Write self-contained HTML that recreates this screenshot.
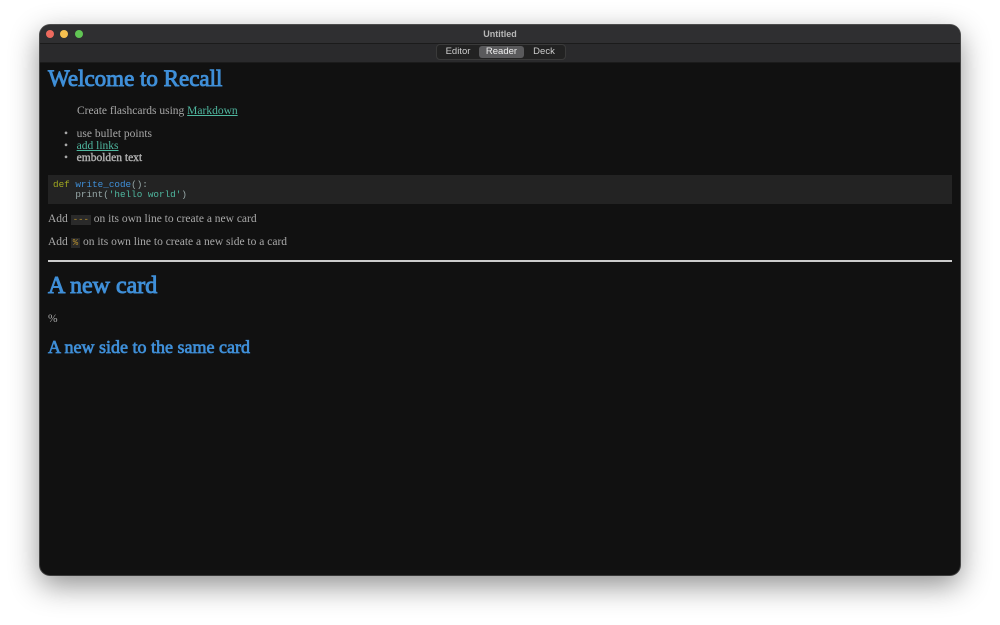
<!DOCTYPE html>
<html><head><meta charset="utf-8"><style>
html,body{margin:0;padding:0;width:1000px;height:625px;background:#fff;overflow:hidden}
.win{position:absolute;left:40px;top:25px;width:920px;height:550px;border-radius:10px;overflow:hidden;background:#111;box-shadow:0 10px 30px rgba(0,0,0,.45),0 0 0 1px #555;}
.tb{position:absolute;left:0;top:0;width:920px;height:18px;background:#2f2f31;border-bottom:1px solid #1b1b1b}
.tb .t{position:absolute;left:0;right:0;top:4px;text-align:center;font:bold 9px "Liberation Sans",sans-serif;color:#b8b8b8}
.dot{position:absolute;top:5px;width:8px;height:8px;border-radius:50%}
.tool{position:absolute;left:0;top:19px;width:920px;height:18px;background:#2a2a2c;border-bottom:1px solid #1b1b1b}
.seg{position:absolute;left:396px;top:0px;width:128px;height:14px;border-radius:4px;background:#222;border:1px solid #3a3a3a;font:9.5px "Liberation Sans",sans-serif;color:#ccc}
.seg span{position:absolute;top:1px;height:12px;line-height:12px;text-align:center;border-radius:3px}
.c{position:absolute;left:8px;top:38px;width:904px;font-family:"Liberation Serif",serif;color:#a8a8a8;font-size:11.5px}
.hb{font-family:"Liberation Serif",serif;font-weight:normal;-webkit-text-stroke:0.9px #3f8fd8;color:#3f8fd8}
a{color:#4fb8a0;text-decoration:underline}
.abs{position:absolute;white-space:nowrap}
b{font-weight:normal;-webkit-text-stroke:0.4px #b0b0b0;color:#b0b0b0}
code{font-family:"Liberation Mono",monospace;font-size:9px;background:#2a2a2a;padding:0 2px;color:#b8902e}
</style></head><body>
<div class="win">
<div class="tb"><div class="dot" style="left:6px;background:#ed6a5e"></div><div class="dot" style="left:20px;background:#f5bf4f"></div><div class="dot" style="left:35px;background:#61c554"></div><div class="t">Untitled</div></div>
<div class="tool"><div class="seg"><span style="left:2px;width:38px">Editor</span><span style="left:42px;width:45px;background:#5a5a5c;color:#eee">Reader</span><span style="left:88px;width:38px">Deck</span></div></div>
<div class="c">
<div class="abs hb" style="left:0;top:3px;font-size:23px">Welcome to Recall</div>
<div class="abs" style="left:29px;top:42px">Create flashcards using <a>Markdown</a></div>
<div class="abs" style="left:16px;top:65px;line-height:12px">
<div>•&nbsp;&nbsp;&nbsp;use bullet points</div>
<div>•&nbsp;&nbsp;&nbsp;<a>add links</a></div>
<div>•&nbsp;&nbsp;&nbsp;<b>embolden text</b></div></div>
<div class="abs" style="left:0;top:112px;width:904px;height:29px;background:#232323;font-family:'Liberation Mono',monospace;font-size:9.3px;line-height:10px;padding:5px 0 0 5px;box-sizing:border-box;color:#9aa"><span style="color:#a0a820">def</span> <span style="color:#3f8fd8">write_code</span>():<br>&nbsp;&nbsp;&nbsp;&nbsp;print(<span style="color:#4fb8a0">'hello world'</span>)</div>
<div class="abs" style="left:0;top:150px">Add <code>---</code> on its own line to create a new card</div>
<div class="abs" style="left:0;top:173px">Add <code>%</code> on its own line to create a new side to a card</div>
<div class="abs" style="left:0;top:197px;width:904px;height:2px;background:#ccc"></div>
<div class="abs hb" style="left:0;top:210px;font-size:24px">A new card</div>
<div class="abs" style="left:0;top:250px">%</div>
<div class="abs hb" style="left:0;top:274px;font-size:18px;-webkit-text-stroke-width:0.7px">A new side to the same card</div>
</div></div>
</body></html>
